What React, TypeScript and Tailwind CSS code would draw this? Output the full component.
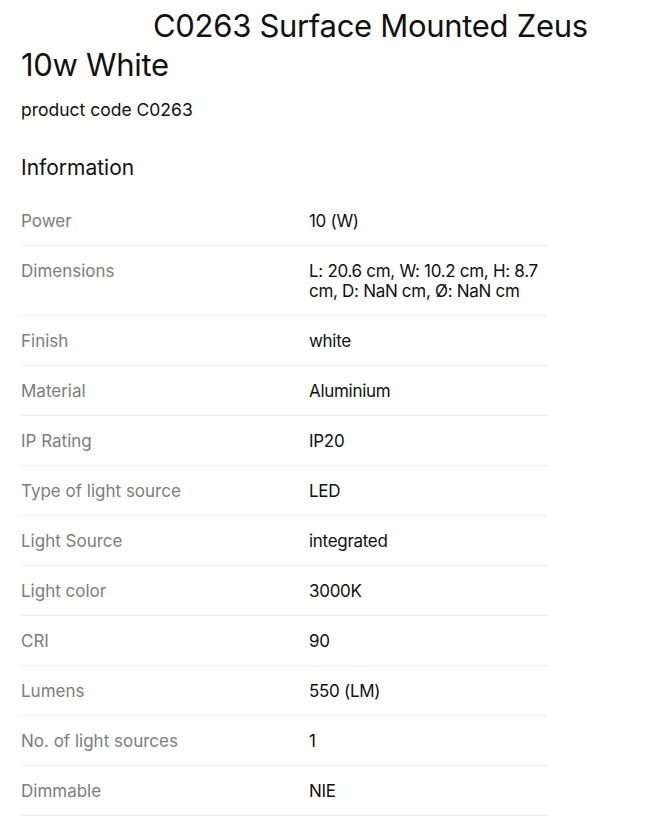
const ROWS: [string, string][] = [
  ['Power', '10 (W)'],
  ['Dimensions', 'L: 20.6 cm, W: 10.2 cm, H: 8.7 cm, D: NaN cm, Ø: NaN cm'],
  ['Finish', 'white'],
  ['Material', 'Aluminium'],
  ['IP Rating', 'IP20'],
  ['Type of light source', 'LED'],
  ['Light Source', 'integrated'],
  ['Light color', '3000K'],
  ['CRI', '90'],
  ['Lumens', '550 (LM)'],
  ['No. of light sources', '1'],
  ['Dimmable', 'NIE'],
];

export default function App() {
  return (
    <div className="min-h-screen bg-white px-[21px] pt-[6px] font-['Inter',sans-serif] text-[#111]">
      <h1 className="indent-[132px] text-[31px] leading-[39px] font-normal tracking-[-0.3px]">
        C0263 Surface Mounted Zeus 10w White
      </h1>
      <p className="mt-[16px] text-[17.5px] leading-5">product code C0263</p>

      <h2 className="mt-[34px] text-[21px] leading-7">Information</h2>

      <div className="mt-[14px] w-[527px]">
        {ROWS.map(([label, value]) => (
          <div key={label} className="flex border-b border-[#efefef] pt-[15px] pb-[14px] text-[17px] leading-5">
            <div className="w-[288px] shrink-0 text-[#7d7d7d]">{label}</div>
            <div className="flex-1 tracking-[-0.3px]">{value}</div>
          </div>
        ))}
      </div>
    </div>
  );
}
